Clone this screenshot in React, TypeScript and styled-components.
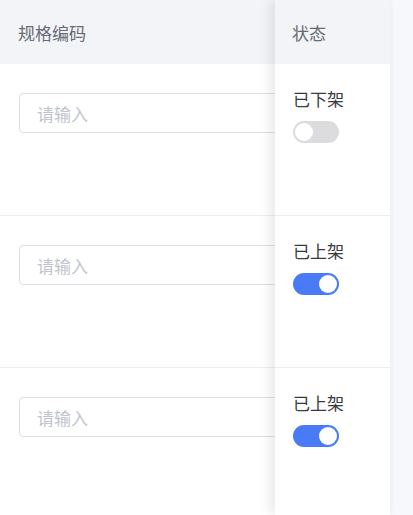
import React from 'react';
import styled, { createGlobalStyle } from 'styled-components';

const GlobalStyle = createGlobalStyle`
  html, body {
    margin: 0;
    padding: 0;
    background: #f7f8fb;
    font-family: "Noto Sans CJK SC", "Noto Sans", sans-serif;
  }
`;

const Page = styled.div`
  display: flex;
  flex-direction: row;
  width: 413px;
  height: 515px;
  overflow: hidden;
  background: #f7f8fb;
`;

const ScrollColumn = styled.div`
  width: 275px;
  flex: none;
  overflow: hidden;
  background: #ffffff;
`;

const FixedColumn = styled.div`
  width: 115px;
  flex: none;
  background: #ffffff;
  position: relative;
  box-shadow: -6px 0 10px rgba(0, 0, 0, 0.08), 2px 0 4px rgba(0, 0, 0, 0.03);
`;

const HeaderCell = styled.div<{ $indent: number }>`
  height: 64px;
  box-sizing: border-box;
  display: flex;
  align-items: center;
  padding-left: ${p => p.$indent}px;
  background: #f3f4f8;
  color: #666a73;
  font-size: 17px;
  white-space: nowrap;
`;

const BodyCell = styled.div<{ $indent: number; $top: number }>`
  height: 152px;
  box-sizing: border-box;
  padding: ${p => p.$top}px 0 0 ${p => p.$indent}px;
  border-bottom: 1px solid #ebedf2;
`;

const TextInput = styled.input`
  display: block;
  width: 300px;
  height: 40px;
  box-sizing: border-box;
  border: 1px solid #dcdfe6;
  border-radius: 4px;
  padding: 0 17px;
  font-family: "Noto Sans CJK SC", "Noto Sans", sans-serif;
  font-size: 17px;
  color: #333;
  outline: none;
  &::placeholder {
    color: #c0c4cc;
  }
`;

const StatusLabel = styled.div`
  font-size: 17px;
  line-height: 24px;
  color: #3a3a3f;
  white-space: nowrap;
`;

const Toggle = styled.div<{ $on: boolean }>`
  width: 46px;
  height: 22px;
  margin-top: 10px;
  border-radius: 11px;
  background: ${p => (p.$on ? '#4a7bf7' : '#dcdcdf')};
  position: relative;
`;

const Knob = styled.span<{ $on: boolean }>`
  position: absolute;
  top: 2px;
  left: ${p => (p.$on ? '26px' : '2px')};
  width: 18px;
  height: 18px;
  border-radius: 50%;
  background: #ffffff;
`;

const rows = [
  { code: '', on: false },
  { code: '', on: true },
  { code: '', on: true },
];

const App: React.FC = () => {
  return (
    <>
      <GlobalStyle />
      <Page>
        <ScrollColumn>
          <HeaderCell $indent={18}>规格编码</HeaderCell>
          {rows.map((row, index) => (
            <BodyCell key={index} $indent={19} $top={29}>
              <TextInput placeholder="请输入" defaultValue={row.code} />
            </BodyCell>
          ))}
        </ScrollColumn>
        <FixedColumn>
          <HeaderCell $indent={17}>状态</HeaderCell>
          {rows.map((row, index) => (
            <BodyCell key={index} $indent={18} $top={23}>
              <StatusLabel>{row.on ? '已上架' : '已下架'}</StatusLabel>
              <Toggle $on={row.on}>
                <Knob $on={row.on} />
              </Toggle>
            </BodyCell>
          ))}
        </FixedColumn>
      </Page>
    </>
  );
};

export default App;
